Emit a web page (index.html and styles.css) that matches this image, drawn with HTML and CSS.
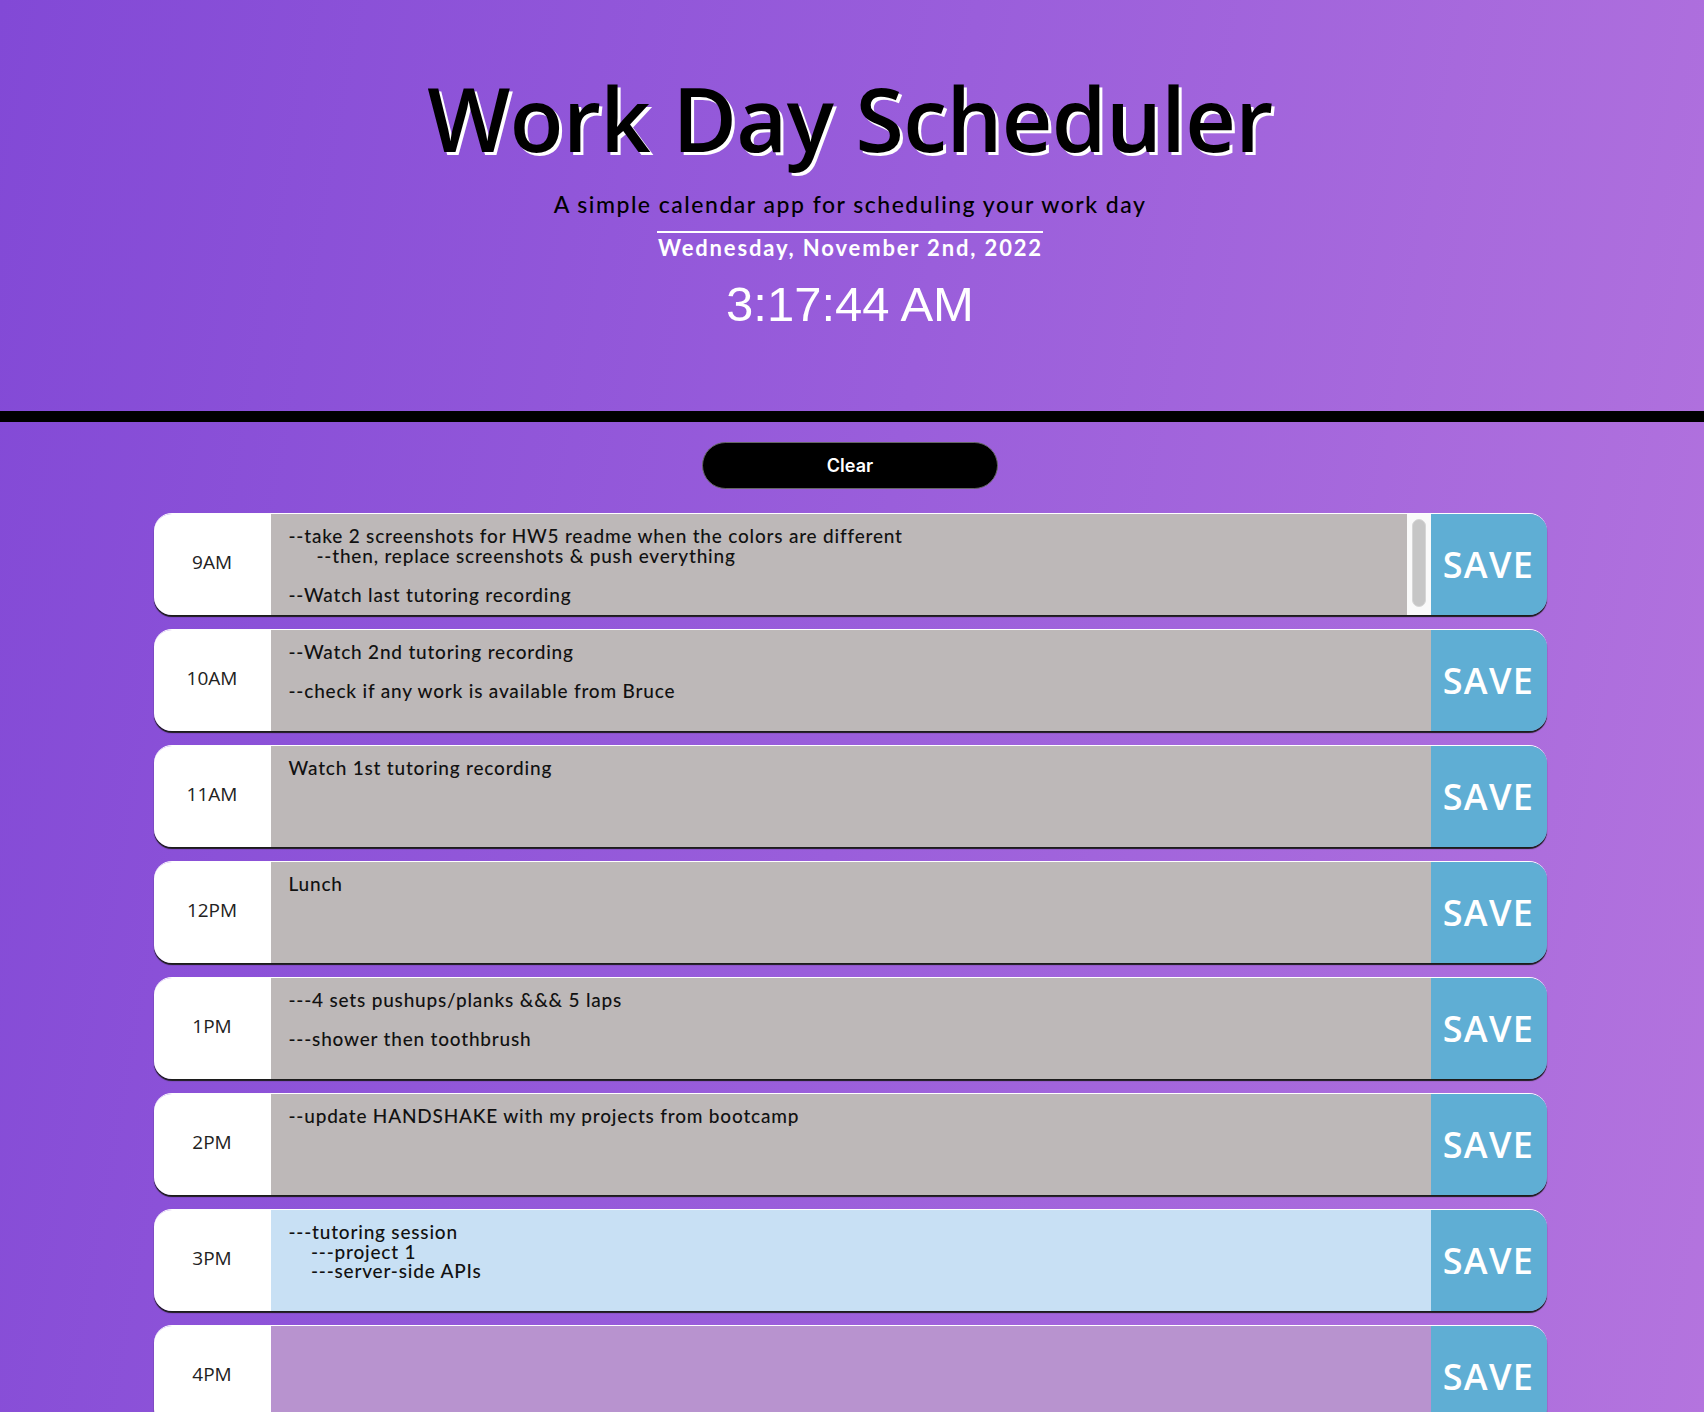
FILE: index.html
```html
<!DOCTYPE html>
<html lang="en">
<head>
<meta charset="utf-8">
<title>Work Day Scheduler</title>
<link rel="stylesheet" href="styles.css">
</head>
<body>
<header class="jumbotron">
  <h1 class="title">Work Day Scheduler</h1>
  <p class="lead">A simple calendar app for scheduling your work day</p>
  <p class="current-day">Wednesday, November 2nd, 2022</p>
  <p class="current-time">3:17:44 AM</p>
</header>
<main class="container">
  <div class="clear-wrap"><button class="clear-btn">Clear</button></div>
  <div class="time-block past">
    <div class="hour">9AM</div>
    <textarea class="description">--take 2 screenshots for HW5 readme when the colors are different
     --then, replace screenshots &amp; push everything

--Watch last tutoring recording
</textarea>
    <div class="fake-scrollbar"><span class="thumb"></span></div>
    <button class="save-btn">SAVE</button>
  </div>
  <div class="time-block past">
    <div class="hour">10AM</div>
    <textarea class="description">--Watch 2nd tutoring recording

--check if any work is available from Bruce</textarea>
    <button class="save-btn">SAVE</button>
  </div>
  <div class="time-block past">
    <div class="hour">11AM</div>
    <textarea class="description">Watch 1st tutoring recording</textarea>
    <button class="save-btn">SAVE</button>
  </div>
  <div class="time-block past">
    <div class="hour">12PM</div>
    <textarea class="description">Lunch</textarea>
    <button class="save-btn">SAVE</button>
  </div>
  <div class="time-block past">
    <div class="hour">1PM</div>
    <textarea class="description">---4 sets pushups/planks &amp;&amp;&amp; 5 laps

---shower then toothbrush</textarea>
    <button class="save-btn">SAVE</button>
  </div>
  <div class="time-block past">
    <div class="hour">2PM</div>
    <textarea class="description">--update HANDSHAKE with my projects from bootcamp</textarea>
    <button class="save-btn">SAVE</button>
  </div>
  <div class="time-block present">
    <div class="hour">3PM</div>
    <textarea class="description">---tutoring session
    ---project 1
    ---server-side APIs</textarea>
    <button class="save-btn">SAVE</button>
  </div>
  <div class="time-block future">
    <div class="hour">4PM</div>
    <textarea class="description"></textarea>
    <button class="save-btn">SAVE</button>
  </div>
</main>
</body>
</html>
```
FILE: styles.css
```css
html {
  background: linear-gradient(100deg, #8249d6 0%, #9a5edb 50%, #b474de 100%);
  min-height: 100%;
}
body {
  margin: 0;
  padding-right: 4px;
  font-family: "Lato", "Open Sans", sans-serif;
  color: #000;
  min-height: 1412px;
  overflow: hidden;
}
.jumbotron {
  box-sizing: border-box;
  height: 422px;
  padding-top: 65px;
  text-align: center;
  border-bottom: 11px solid #000;
  margin-right: -4px;
  padding-right: 4px;
}
.title {
  margin: 0;
  font-family: "Open Sans", sans-serif;
  font-weight: 600;
  font-size: 88px;
  line-height: 106px;
  letter-spacing: -0.6px;
  color: #000;
  text-shadow: 3px 3px 0 #fff;
}
.lead {
  margin: 18px 0 0;
  font-size: 23px;
  line-height: 30px;
  font-weight: 500;
  letter-spacing: 1.5px;
}
.current-day {
  display: inline-block;
  margin: 12px 0 0;
  border-top: 2px solid #fff;
  font-size: 22px;
  line-height: 30px;
  font-weight: 700;
  letter-spacing: 1.85px;
  color: #fff;
  padding: 0 0 0 1px;
}
.current-time {
  margin: 11px 0 0;
  font-family: "Liberation Sans", Arial, sans-serif;
  font-size: 49px;
  line-height: 60px;
  color: #fff;
}
.container {
  width: 1393px;
  margin: 0 auto;
}
.clear-wrap {
  display: flex;
  justify-content: center;
  padding-top: 20px;
  margin-bottom: 24px;
}
.clear-btn {
  width: 296px;
  height: 47px;
  border-radius: 24px;
  background: #000;
  border: 1px solid #666;
  color: #fff;
  font-family: "Inter", sans-serif;
  font-weight: 600;
  font-size: 18px;
}
.time-block {
  display: flex;
  height: 102px;
  margin-bottom: 14px;
  border-top: 1px solid #fff;
  border-radius: 18px;
  overflow: hidden;
  box-shadow: 0 2px 1px #1c1c1c;
  box-sizing: border-box;
}
.hour {
  width: 117px;
  flex: none;
  box-sizing: border-box;
  padding-bottom: 6px;
  background: #fff;
  display: flex;
  align-items: center;
  justify-content: center;
  font-family: "Open Sans", sans-serif;
  font-size: 19px;
  color: #222;
}
.description {
  flex: 1;
  box-sizing: border-box;
  border: none;
  margin: 0;
  resize: none;
  padding: 12px 16px 14px 18px;
  font-family: "Lato", sans-serif;
  font-weight: 500;
  font-size: 19px;
  line-height: 19.5px;
  letter-spacing: 0.8px;
  color: #111;
  outline: none;
  overflow: hidden;
}
.fake-scrollbar {
  width: 24px;
  flex: none;
  box-sizing: border-box;
  background: #fafafa;
  padding: 5px 5px 8px 5px;
  display: flex;
}
.thumb {
  flex: 1;
  background: #c6c6c6;
  border: 1px solid #d6d6d6;
  border-radius: 8px;
}
.past .description { background: #bdb8b8; }
.present .description { background: #c8e0f4; }
.future .description { background: #b893cf; }
.save-btn {
  width: 116px;
  flex: none;
  border: none;
  background: #5faed4;
  color: #fff;
  font-family: "Open Sans", sans-serif;
  font-weight: 600;
  font-size: 36px;
  letter-spacing: 1.4px;
  padding: 0;
}
```
